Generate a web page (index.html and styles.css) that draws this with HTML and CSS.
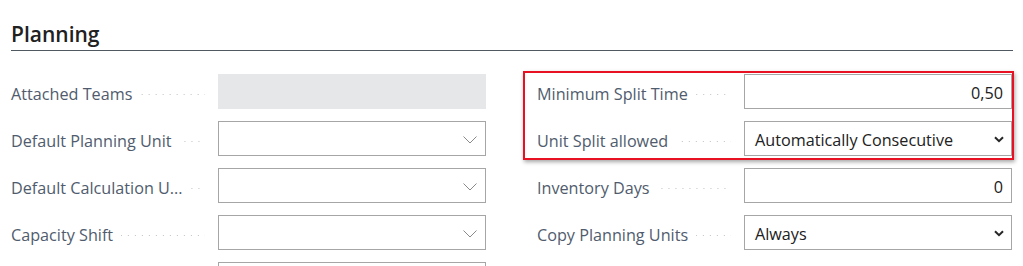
FILE: index.html
```html
<!DOCTYPE html>
<html lang="en">
<head>
    <meta charset="UTF-8">
    <title>Planning</title>
    <link rel="stylesheet" href="styles.css">
</head>
<body>
    <div class="section">
        <h2 class="section-title">Planning</h2>
        <div class="fields">
            <div class="column">
                <div class="field">
                    <span class="label"><span class="label-text">Attached Teams</span><span class="leader"></span></span>
                    <div class="control disabled"></div>
                </div>
                <div class="field">
                    <span class="label"><span class="label-text">Default Planning Unit</span><span class="leader"></span></span>
                    <div class="control lookup">
                        <span class="value"></span>
                        <svg class="chevron-thin" width="14" height="8" viewBox="0 0 14 8"><path d="M0.5 0.5 L7 7 L13.5 0.5" fill="none" stroke="#8a8a8a" stroke-width="1"/></svg>
                    </div>
                </div>
                <div class="field">
                    <span class="label"><span class="label-text">Default Calculation U...</span><span class="leader"></span></span>
                    <div class="control lookup">
                        <span class="value"></span>
                        <svg class="chevron-thin" width="14" height="8" viewBox="0 0 14 8"><path d="M0.5 0.5 L7 7 L13.5 0.5" fill="none" stroke="#8a8a8a" stroke-width="1"/></svg>
                    </div>
                </div>
                <div class="field">
                    <span class="label"><span class="label-text">Capacity Shift</span><span class="leader"></span></span>
                    <div class="control lookup">
                        <span class="value"></span>
                        <svg class="chevron-thin" width="14" height="8" viewBox="0 0 14 8"><path d="M0.5 0.5 L7 7 L13.5 0.5" fill="none" stroke="#8a8a8a" stroke-width="1"/></svg>
                    </div>
                </div>
                <div class="field">
                    <span class="label"><span class="label-text"></span><span class="leader"></span></span>
                    <div class="control"></div>
                </div>
            </div>

            <div class="column">
                <div class="highlight">
                    <div class="field">
                        <span class="label"><span class="label-text">Minimum Split Time</span><span class="leader"></span></span>
                        <div class="control number"><span class="value">0,50</span></div>
                    </div>
                    <div class="field">
                        <span class="label"><span class="label-text">Unit Split allowed</span><span class="leader"></span></span>
                        <div class="control select">
                            <span class="value">Automatically Consecutive</span>
                            <svg class="chevron-bold" width="10" height="7" viewBox="0 0 10 7"><path d="M1 1.2 L5 5.2 L9 1.2" fill="none" stroke="#262626" stroke-width="2"/></svg>
                        </div>
                    </div>
                </div>
                <div class="field">
                    <span class="label"><span class="label-text">Inventory Days</span><span class="leader"></span></span>
                    <div class="control number"><span class="value">0</span></div>
                </div>
                <div class="field">
                    <span class="label"><span class="label-text">Copy Planning Units</span><span class="leader"></span></span>
                    <div class="control select">
                        <span class="value">Always</span>
                        <svg class="chevron-bold" width="10" height="7" viewBox="0 0 10 7"><path d="M1 1.2 L5 5.2 L9 1.2" fill="none" stroke="#262626" stroke-width="2"/></svg>
                    </div>
                </div>
            </div>
        </div>
    </div>
</body>
</html>
```

FILE: styles.css
```css
body {
    margin: 0;
    background: #ffffff;
    font-family: 'Open Sans', 'Noto Sans', sans-serif;
    color: #212121;
    overflow: hidden;
}
.section {
    padding: 0 10px 0 11px;
}
.section-title {
    margin: 0;
    padding: 22px 0 4px 0;
    font-size: 21px;
    font-weight: 600;
    line-height: 24px;
    color: #212121;
    border-bottom: 1px solid #505861;
}
.fields {
    display: grid;
    grid-template-columns: 475px 475px;
    column-gap: 51px;
    margin-top: 23px;
}
.column {
    display: flex;
    flex-direction: column;
    gap: 12px;
}
.field {
    display: flex;
    align-items: center;
    height: 35px;
}
.label {
    flex: 1;
    display: flex;
    align-items: center;
    min-width: 0;
    padding-top: 4px;
    font-size: 16.2px;
    color: #505c6d;
}
.label-text {
    white-space: nowrap;
}
.leader {
    flex: 1;
    height: 2px;
    margin: 2px 13px 0 8px;
    background-image: linear-gradient(to right, #c2c2c2 1px, transparent 1px);
    background-size: 7px 1px;
    background-repeat: repeat-x;
    background-position: right center;
}
.control {
    width: 268px;
    height: 35px;
    box-sizing: border-box;
    border: 1px solid #a6a6a6;
    display: flex;
    align-items: center;
    padding: 2px 8px 0 10px;
    font-size: 16.2px;
    color: #212121;
}
.control.disabled {
    background: #e6e7e8;
    border-color: #e6e7e8;
}
.control .value {
    flex: 1;
    white-space: nowrap;
}
.control.number .value {
    text-align: right;
}
.control.lookup {
    padding-right: 8px;
}
.control.select {
    padding-right: 7px;
}
.highlight {
    display: flex;
    flex-direction: column;
    gap: 12px;
    border: 2px solid #e81123;
    padding: 1px 0 2px 12px;
    margin: -3px -2px -4px -14px;
    box-shadow: 1px 2px 4px rgba(0, 0, 0, 0.35);
}
```
